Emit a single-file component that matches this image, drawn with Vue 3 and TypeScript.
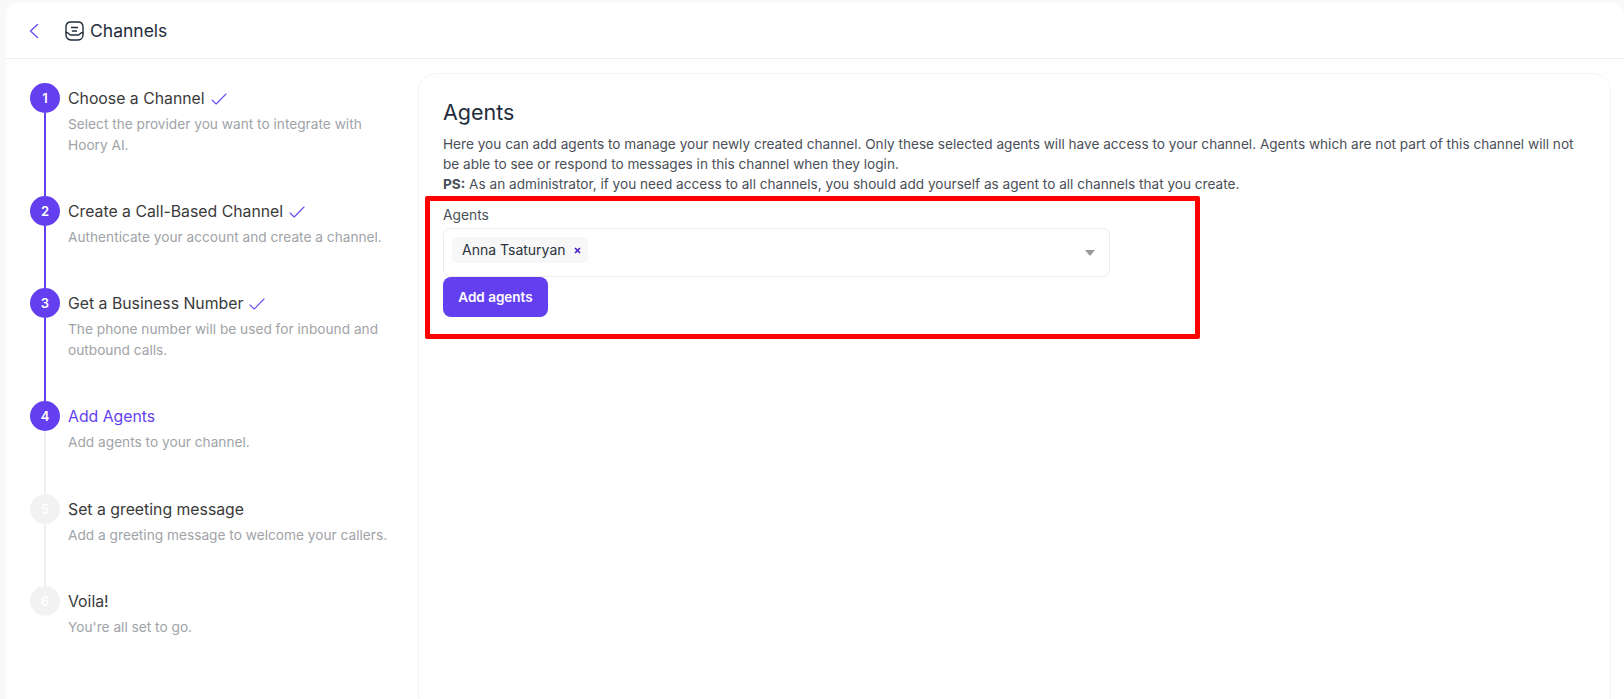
<template>
  <div class="page">
    <div class="panel">
      <header class="topbar">
        <button class="back" aria-label="Back">
          <svg width="10" height="16" viewBox="0 0 10 16" fill="none"><path d="M8.500 1.500 1.500 8l7 6.500" stroke="#6d4aef" stroke-width="1.300" stroke-linecap="round" stroke-linejoin="round" /></svg>
        </button>
        <svg class="logo" width="19" height="20" viewBox="0 0 19 20" fill="none" stroke="#1f2d3d" stroke-width="1.400" stroke-linecap="round">
          <path d="M6 1h7c3 0 5 2 5 5v8c0 3-2.500 5-5.500 5h-6C3.500 19 1 17 1 14V6c0-3 2-5 5-5Z" />
          <path d="M1.200 11.500c3 0 2.800 2.500 5 2.500h6.600c2.200 0 2-2.500 5-2.500" />
          <path d="M6.500 6.500h6M7.500 10h4" />
        </svg>
        <span class="page-title">Channels</span>
      </header>

      <div class="body">
        <ol class="steps">
          <li v-for="(step, i) in steps" :key="step.title" class="step" :class="{ active: i === current, pending: i > current, 'two-line': step.tall }">
            <div class="rail">
              <span class="dot">{{ i + 1 }}</span>
              <span v-if="i < steps.length - 1" class="line"></span>
            </div>
            <div class="step-text">
              <div class="step-title">
                {{ step.title }}
                <svg v-if="i < current" width="16" height="12" viewBox="0 0 16 12" fill="none"><path d="M1 7l4.200 4L15 1" stroke="#6d4aef" stroke-width="1.100" stroke-linecap="round" stroke-linejoin="round" /></svg>
              </div>
              <p class="step-desc">{{ step.desc }}</p>
            </div>
          </li>
        </ol>

        <section class="card">
          <h2>Agents</h2>
          <p class="intro">
            Here you can add agents to manage your newly created channel. Only these selected agents will have access to your channel. Agents which are not part of this channel will not be able to see or respond to messages in this channel when they login.<br />
            <b>PS:</b> As an administrator, if you need access to all channels, you should add yourself as agent to all channels that you create.
          </p>
          <label class="field-label">Agents</label>
          <div class="select">
            <span class="chip">Anna Tsaturyan
              <svg width="7" height="7" viewBox="0 0 7 7" fill="none"><path d="M1 1l5 5M6 1 1 6" stroke="#4a22c9" stroke-width="1.700" /></svg>
            </span>
            <span class="caret"></span>
          </div>
          <button class="add">Add agents</button>
          <div class="highlight"></div>
        </section>
      </div>
    </div>
  </div>
</template>

<script setup lang="ts">
const current = 3;

const steps = [
  { title: 'Choose a Channel', desc: 'Select the provider you want to integrate with Hoory AI.', tall: true },
  { title: 'Create a Call-Based Channel', desc: 'Authenticate your account and create a channel.', tall: false },
  { title: 'Get a Business Number', desc: 'The phone number will be used for inbound and outbound calls.', tall: true },
  { title: 'Add Agents', desc: 'Add agents to your channel.', tall: false },
  { title: 'Set a greeting message', desc: 'Add a greeting message to welcome your callers.', tall: false },
  { title: 'Voila!', desc: "You're all set to go.", tall: false },
];
</script>

<style>
html, body { margin: 0; background: #f9f9f9; overflow: hidden; }
</style>

<style scoped>
.page { height: 699px; padding: 3px 0 0 6px; box-sizing: border-box; font-family: Inter, "Noto Sans", sans-serif; color: #1f2d3d; overflow: hidden; }
.panel { background: #fff; height: 696px; border-radius: 12px 12px 0 0; overflow: hidden; }

.topbar { height: 55px; border-bottom: 1px solid #eeeeee; display: flex; align-items: center; padding-left: 23px; }
.back { width: 10px; height: 16px; padding: 0; margin-right: 26px; border: 0; background: none; display: flex; }
.logo { margin-right: 6px; }
.page-title { font-size: 17.500px; }

.body { display: flex; align-items: flex-start; padding: 14px 13px 0 12px; }

.steps { list-style: none; margin: 10px 0 0 12px; padding: 0; width: 388px; flex: none; }
.step { display: flex; gap: 8px; height: 92px; }
.step.two-line { height: 113px; }
.step:nth-child(4) { height: 93px; }
.step:last-child { height: auto; }
.rail { width: 30px; flex: none; display: flex; flex-direction: column; align-items: center; }
.dot { width: 30px; height: 30px; border-radius: 50%; background: #643ff0; color: #fff; font-size: 13px; font-weight: 600; display: flex; align-items: center; justify-content: center; flex: none; }
.line { width: 2px; flex: 1; background: #643ff0; }
.step.active .line { background: #f0f0f0; }
.step.pending .dot { background: #f2f2f2; color: #fff; }
.step.pending .line { background: #f0f0f0; }

.step-text { padding-top: 4px; }
.step-title { font-size: 15.800px; line-height: 24px; color: #3a3a3a; display: flex; align-items: center; gap: 6px; }
.step.active .step-title { color: #643ff0; }
.step-desc { margin: 3px 0 0; font-size: 13.700px; line-height: 21px; color: #a0a3a8; width: 322px; }

.card { position: relative; flex: 1; height: 640px; padding: 24px 24px 0; box-sizing: border-box; border: 1px solid #f3f3f3; border-radius: 18px; }
h2 { margin: 0; font-size: 21.500px; font-weight: 400; line-height: 28px; color: #1f2d3d; }
.intro { margin: 8px 0 0; font-size: 13.620px; line-height: 20px; color: #4a4f57; }
.intro b { font-weight: 700; }
.field-label { display: block; margin-top: 11px; font-size: 13.800px; line-height: 20px; color: #4a4f57; }
.select { position: relative; width: 667px; height: 49px; margin-top: 3px; box-sizing: border-box; border: 1px solid #ebebeb; border-radius: 7px; padding: 8px; display: flex; align-items: flex-start; }
.chip { height: 26px; box-sizing: border-box; padding: 0 7px 0 10px; background: #f7f7f7; border-radius: 5px; font-size: 14px; line-height: 26px; color: #2b3440; display: inline-flex; align-items: center; gap: 8px; }
.caret { position: absolute; right: 14px; top: 21px; border-style: solid; border-width: 6px 5px 0; border-color: #999 transparent transparent; }
.add { display: block; width: 105px; height: 40px; border: 0; border-radius: 8px; background: #643ff0; color: #fff; font: 600 13.500px Inter, "Noto Sans", sans-serif; }
.highlight { position: absolute; left: 6px; top: 122px; width: 775px; height: 143px; box-sizing: border-box; border: 5px solid #ff0000; border-radius: 2px; pointer-events: none; }
</style>
